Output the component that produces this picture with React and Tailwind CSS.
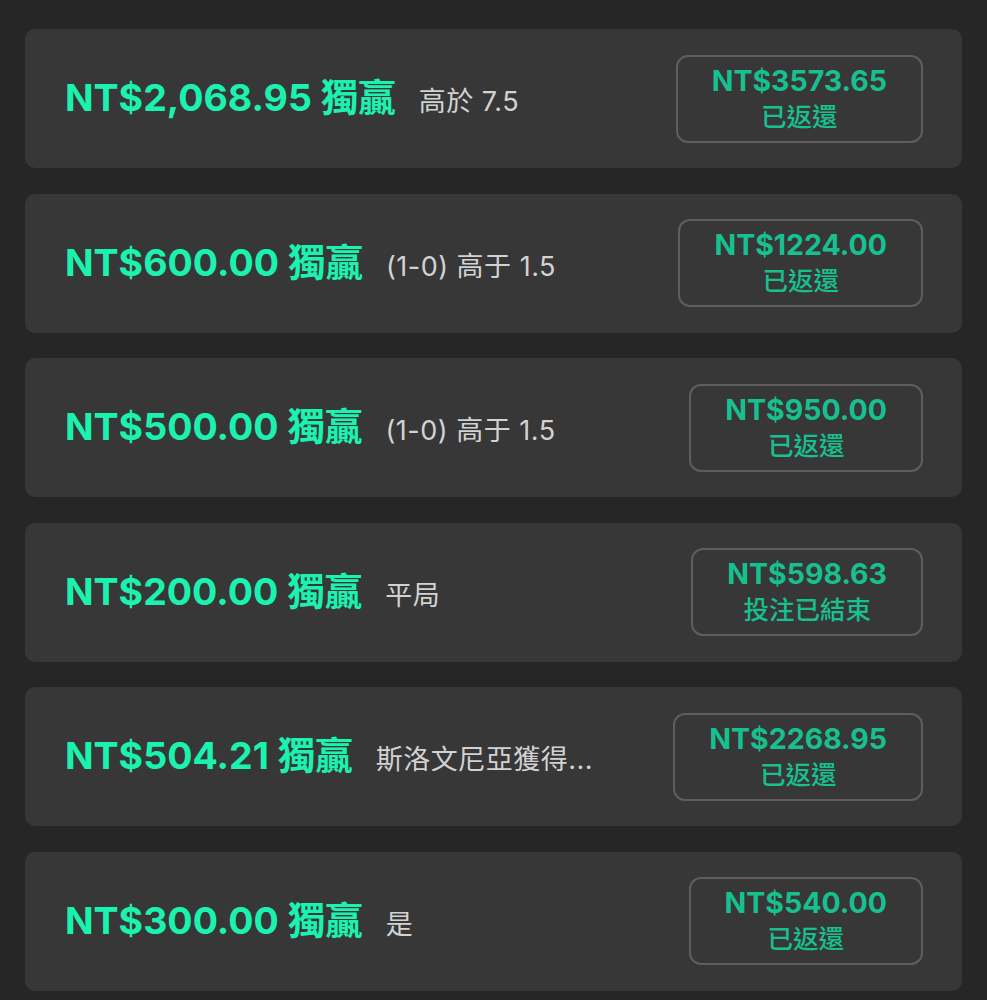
import React from "react";

const rows = [
  { amt: "NT$2,068.95", sel: "高於 7.5", ret: "NT$3573.65", status: "已返還" },
  { amt: "NT$600.00", sel: "(1-0) 高于 1.5", ret: "NT$1224.00", status: "已返還" },
  { amt: "NT$500.00", sel: "(1-0) 高于 1.5", ret: "NT$950.00", status: "已返還" },
  { amt: "NT$200.00", sel: "平局", ret: "NT$598.63", status: "投注已結束" },
  { amt: "NT$504.21", sel: "斯洛文尼亞獲得...", ret: "NT$2268.95", status: "已返還" },
  { amt: "NT$300.00", sel: "是", ret: "NT$540.00", status: "已返還" },
];

export default function App() {
  return (
    <div
      className="min-h-screen w-[987px] bg-[#262626] px-[25px] pt-[29px] pb-[10px] flex flex-col gap-[25.5px]"
      style={{ fontFamily: 'Inter, "Noto Sans CJK TC", sans-serif' }}
    >
      {rows.map((r, i) => (
        <div
          key={i}
          className="h-[139px] rounded-[10px] bg-[#373737] pl-[40px] pr-[39px] flex items-center justify-between"
        >
          <div className="flex items-baseline whitespace-nowrap">
            <span className="text-[37.5px] font-bold text-[#1cf2b0]">
              {r.amt} 獨贏
            </span>
            <span className="ml-[23px] text-[27px] tracking-[0.5px] text-[#d2d2d2]">{r.sel}</span>
          </div>
          <div className="rounded-[12px] border-2 border-[#5e5e5e] px-[34px] py-[6px] flex flex-col items-center">
            <span className="text-[28.5px] leading-[36px] font-bold text-[#17c08f]">{r.ret}</span>
            <span className="text-[25.5px] leading-[36px] font-medium text-[#17c08f]">{r.status}</span>
          </div>
        </div>
      ))}
    </div>
  );
}
